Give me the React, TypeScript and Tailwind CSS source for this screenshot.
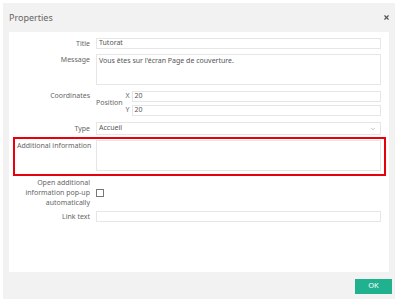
import { X, ChevronDown } from 'lucide-react';

const font = { fontFamily: '"Noto Sans", "Open Sans", sans-serif' };

function Label({ children }: { children: React.ReactNode }) {
  return (
    <div className="w-[82px] shrink-0 pr-[1px] text-right text-[7px] leading-[10px] text-[#666]">
      {children}
    </div>
  );
}

export default function App() {
  return (
    <div className="w-[400px] h-[304px] bg-white p-[3px]" style={font}>
      <div className="relative flex h-[296px] w-[392px] flex-col bg-[#f2f2f2]">
        {/* Header */}
        <div className="flex h-[29px] items-center justify-between pl-[6px] pr-[5px]">
          <span className="text-[9px] text-[#666]">Properties</span>
          <X className="h-[7px] w-[7px] text-[#555]" strokeWidth={4} />
        </div>

        {/* Body */}
        <div className="mx-[6px] flex h-[240px] flex-col bg-white pr-[8px] pt-[6px] text-[7px] text-[#555]">
          {/* Title */}
          <div className="flex items-center gap-[5px]">
            <Label>Title</Label>
            <div className="flex h-[11px] flex-1 items-center border border-[#e6e6e6] px-[2px]">Tutorat</div>
          </div>

          {/* Message */}
          <div className="mt-[5px] flex gap-[5px]">
            <div className="pt-[1px]"><Label>Message</Label></div>
            <div className="h-[31px] flex-1 border border-[#e6e6e6] px-[2px] pt-[1px] leading-[10px]">
              Vous êtes sur l'écran Page de couverture.
            </div>
          </div>

          {/* Coordinates */}
          <div className="mt-[6px] flex gap-[5px]">
            <Label>Coordinates</Label>
            <div className="flex flex-1 items-center gap-[3px]">
              <span className="text-[#666]">Position</span>
              <div className="flex flex-1 flex-col gap-[3px]">
                <div className="flex items-center gap-[2px]">
                  <span className="w-[4px] text-[#666]">X</span>
                  <div className="flex h-[11px] flex-1 items-center border border-[#e6e6e6] px-[2px]">20</div>
                </div>
                <div className="flex items-center gap-[2px]">
                  <span className="w-[4px] text-[#666]">Y</span>
                  <div className="flex h-[11px] flex-1 items-center border border-[#e6e6e6] px-[2px]">20</div>
                </div>
              </div>
            </div>
          </div>

          {/* Type */}
          <div className="mt-[6px] flex items-center gap-[5px]">
            <Label>Type</Label>
            <div className="flex h-[13px] flex-1 items-center justify-between border border-[#e6e6e6] px-[2px]">
              <span>Accueil</span>
              <ChevronDown className="mr-[2px] h-[6px] w-[6px] text-[#888]" strokeWidth={2} />
            </div>
          </div>

          {/* Additional information (highlighted) */}
          <div className="ml-[4px] mr-[-5px] mt-[2px] flex h-[39px] border-2 border-[#e8000b] pr-[3px] pt-[1px]">
            <div className="w-[81px] shrink-0 whitespace-nowrap pl-[2px] pt-[1px] text-[7px] leading-[10px] text-[#666]">
              Additional information
            </div>
            <div className="h-[31px] flex-1 border border-[#e6e6e6]" />
          </div>

          {/* Open pop-up */}
          <div className="mt-[2px] flex items-center gap-[5px]">
            <Label>
              Open additional
              <br />
              information pop-up
              <br />
              automatically
            </Label>
            <div className="h-[8px] w-[8px] border border-[#777] bg-white" />
          </div>

          {/* Link text */}
          <div className="mt-[3px] flex items-center gap-[5px]">
            <Label>Link text</Label>
            <div className="h-[11px] flex-1 border border-[#e6e6e6]" />
          </div>
        </div>

        {/* Footer */}
        <div className="flex flex-1 items-center justify-end pr-[3px]">
          <button className="mt-[1px] h-[15px] w-[37px] bg-[#20b28f] text-[7.5px] text-white">OK</button>
        </div>

        {/* Resize grip */}
        <div className="absolute bottom-[1px] right-[1px] h-[5px] w-[5px] bg-[radial-gradient(#b8c4d6_0.6px,transparent_0.7px)] bg-[length:2px_2px]" />
      </div>
    </div>
  );
}
